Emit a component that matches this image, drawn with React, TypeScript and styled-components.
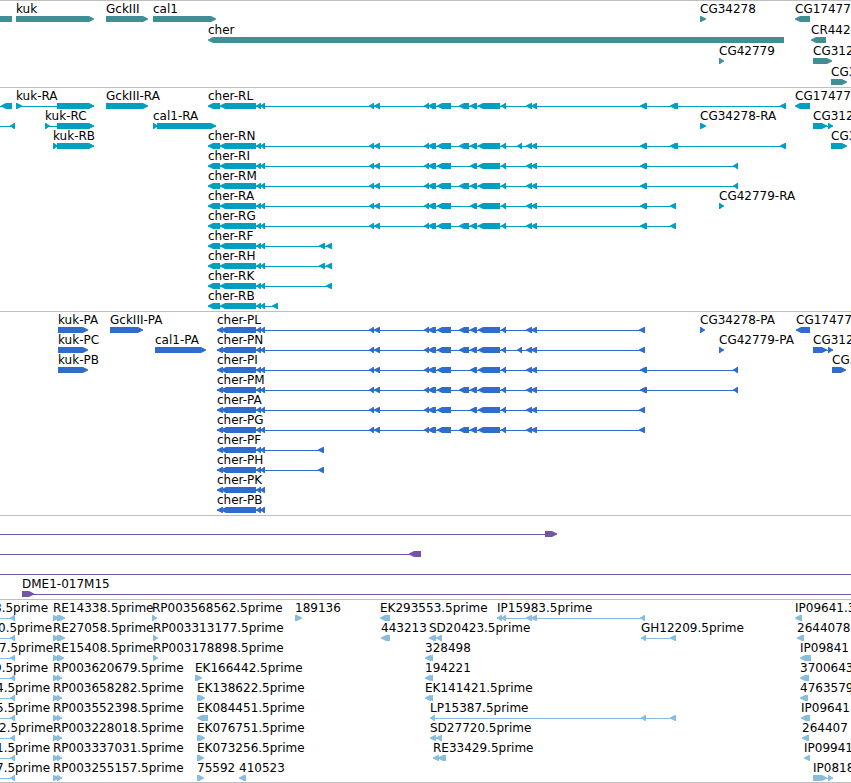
import React from "react";
import styled, { createGlobalStyle } from "styled-components";

type Strand = "+" | "-" | "none";

interface Feature {
  name?: string;
  /** Start of the label, when it differs from the start of the feature. */
  labelAt?: number;
  strand: Strand;
  /** Start and end of every block, left to right. */
  blocks: [number, number][];
  /** Extent of the connecting line; defaults to the extent of the blocks. */
  span?: [number, number];
}

interface TrackData {
  id: string;
  title: string;
  color: string;
  gap: number;
  rows: Feature[][];
}

const FAR = 8000;
const GLYPH = 6;
const TIP = 6;

const fwd = (name: string, ...blocks: [number, number][]): Feature => ({
  name,
  strand: "+",
  blocks,
});

const rev = (name: string, ...blocks: [number, number][]): Feature => ({
  name,
  strand: "-",
  blocks,
});

/* Exons shared by the cher isoforms */
const tail: [number, number][] = [[256, 261], [260, 265]];
const rnaHead: [number, number][] = [[208, 220], [220, 256], ...tail];
const proteinHead: [number, number][] = [[217, 223], [221, 256], ...tail];
const optional: [number, number] = [459, 469];

const middle = (withOptional: boolean, extra: [number, number][] = []): [number, number][] => [
  [369, 374],
  [374, 380],
  [424, 429],
  [428, 436],
  [437, 451],
  ...(withOptional ? [optional] : []),
  [470, 477],
  [478, 500],
  [501, 506],
  ...extra,
  [526, 532],
  [531, 537],
];

const small: [number, number] = [517, 522];

const rna = (name: string, ...blocks: [number, number][]) => rev(name, ...rnaHead, ...blocks);
const protein = (name: string, ...blocks: [number, number][]) =>
  rev(name, ...proteinHead, ...blocks);

const intronEnd: Feature = { strand: "-", blocks: [[10, 15]], span: [0, 15] };

const clippedRead = (name: string, labelAt: number): Feature => ({
  ...intronEnd,
  name,
  labelAt,
});

const tracks: TrackData[] = [
  {
    id: "gene",
    title: "Genes",
    color: "#3f8f94",
    gap: 1,
    rows: [
      [
        { strand: "none", blocks: [[0, 12]] },
        fwd("kuk", [16, 94]),
        fwd("GckIII", [106, 148]),
        fwd("cal1", [153, 216]),
        fwd("CG34278", [700, 706]),
        rev("CG17477", [795, 810]),
      ],
      [rev("cher", [208, 784]), rev("CR442", [811, 826])],
      [fwd("CG42779", [719, 724]), fwd("CG312", [813, 832])],
      [fwd("CG3", [831, 847])],
    ],
  },
  {
    id: "transcript",
    title: "Transcripts",
    color: "#009fc0",
    gap: 0,
    rows: [
      [
        { strand: "-", blocks: [[1, 12]], span: [0, 12] },
        fwd("kuk-RA", [16, 22], [57, 94]),
        fwd("GckIII-RA", [106, 148]),
        rna("cher-RL", ...middle(true), [640, 647], [670, 678], [780, 786]),
        rev("CG17477", [795, 810]),
      ],
      [
        intronEnd,
        fwd("kuk-RC", [45, 50], [57, 94]),
        fwd("cal1-RA", [153, 158], [157, 216]),
        fwd("CG34278-RA", [700, 706]),
        fwd("CG312", [813, 827], [828, 833]),
      ],
      [
        fwd("kuk-RB", [53, 58], [57, 94]),
        rna("cher-RN", ...middle(true, [small]), [640, 647], [670, 678], [780, 786]),
        fwd("CG3", [831, 847]),
      ],
      [rna("cher-RI", ...middle(false), [640, 647], [733, 738])],
      [rna("cher-RM", ...middle(true), [640, 647], [733, 738])],
      [
        rna("cher-RA", ...middle(false), [640, 647], [670, 676]),
        fwd("CG42779-RA", [719, 724]),
      ],
      [rna("cher-RG", ...middle(true), [640, 647], [670, 676])],
      [rna("cher-RF", [319, 325], [326, 332])],
      [rna("cher-RH", [319, 325], [326, 332])],
      [rna("cher-RK", [326, 332])],
      [rna("cher-RB", [272, 278])],
    ],
  },
  {
    id: "protein",
    title: "Proteins",
    color: "#306ccb",
    gap: 0,
    rows: [
      [
        fwd("kuk-PA", [58, 88]),
        fwd("GckIII-PA", [110, 143]),
        protein("cher-PL", ...middle(true), [639, 645]),
        fwd("CG34278-PA", [700, 705]),
        rev("CG17477", [796, 810]),
      ],
      [
        fwd("kuk-PC", [58, 88]),
        fwd("cal1-PA", [155, 206]),
        protein("cher-PN", ...middle(true, [small]), [639, 645]),
        fwd("CG42779-PA", [719, 724]),
        fwd("CG312", [813, 827], [828, 833]),
      ],
      [
        fwd("kuk-PB", [58, 88]),
        protein("cher-PI", ...middle(false), [640, 647], [733, 738]),
        fwd("CG3", [832, 846]),
      ],
      [protein("cher-PM", ...middle(true), [640, 647], [733, 738])],
      [protein("cher-PA", ...middle(false), [639, 645])],
      [protein("cher-PG", ...middle(true), [639, 645])],
      [protein("cher-PF", [318, 324])],
      [protein("cher-PH", [318, 324])],
      [protein("cher-PK")],
      [protein("cher-PB")],
    ],
  },
  {
    id: "bac",
    title: "Clones",
    color: "#7454a6",
    gap: 0,
    rows: [
      [{ strand: "+", blocks: [[545, 557]], span: [0, 557] }],
      [{ strand: "-", blocks: [[409, 421]], span: [0, 421] }],
      [{ strand: "none", blocks: [], span: [0, FAR] }],
      [{ name: "DME1-017M15", strand: "+", blocks: [[22, 34]], span: [22, FAR] }],
    ],
  },
  {
    id: "est",
    title: "cDNA and EST reads",
    color: "#88bddd",
    gap: 0,
    rows: [
      [
        clippedRead("8.5prime", -6),
        fwd("RE14338.5prime", [53, 59], [57, 65]),
        fwd("RP003568562.5prime", [152, 157]),
        fwd("189136", [295, 302]),
        rev("EK293553.5prime", [380, 390]),
        rev("IP15983.5prime", [497, 502], [501, 506], [526, 532], [531, 537], [640, 645]),
        rev("IP09641.3", [795, 802]),
      ],
      [
        clippedRead("0.5prime", -2),
        fwd("RE27058.5prime", [53, 59], [57, 65]),
        fwd("RP003313177.5prime", [153, 158]),
        rev("443213", [381, 390]),
        rev("SD20423.5prime", [429, 436], [436, 442]),
        rev("GH12209.5prime", [641, 646], [670, 676]),
        rev("2644078", [797, 804]),
      ],
      [
        clippedRead("7.5prime", -1),
        fwd("RE15408.5prime", [53, 59], [57, 64]),
        fwd("RP003178898.5prime", [153, 158]),
        rev("328498", [425, 431], [428, 433]),
        rev("IP09841", [800, 811]),
      ],
      [
        clippedRead("9.5prime", -6),
        fwd("RP003620679.5prime", [53, 59], [57, 62]),
        fwd("EK166442.5prime", [195, 202]),
        rev("194221", [425, 431], [428, 433]),
        rev("3700643", [800, 809]),
      ],
      [
        clippedRead("4.5prime", -4),
        fwd("RP003658282.5prime", [53, 59], [57, 62]),
        fwd("EK138622.5prime", [197, 205]),
        rev("EK141421.5prime", [425, 431], [428, 433]),
        rev("4763579", [800, 808]),
      ],
      [
        clippedRead("5.5prime", -4),
        fwd("RP003552398.5prime", [53, 59], [57, 62]),
        rev("EK084451.5prime", [197, 208]),
        rev("LP15387.5prime", [430, 435], [641, 646], [670, 676]),
        rev("IP09641", [801, 810]),
      ],
      [
        clippedRead("2.5prime", -1),
        fwd("RP003228018.5prime", [53, 59], [57, 62]),
        fwd("EK076751.5prime", [197, 205]),
        rev("SD27720.5prime", [430, 436], [436, 442]),
        rev("264407", [802, 809]),
      ],
      [
        clippedRead("1.5prime", -4),
        fwd("RP003337031.5prime", [53, 59], [57, 62]),
        fwd("EK073256.5prime", [197, 204]),
        rev("RE33429.5prime", [433, 439], [438, 446]),
        rev("IP09941", [804, 810]),
      ],
      [
        clippedRead("7.5prime", -4),
        fwd("RP003255157.5prime", [53, 59], [57, 62]),
        fwd("75592", [197, 204]),
        rev("410523", [239, 246]),
        fwd("IP0818", [813, 827], [828, 833]),
      ],
    ],
  },
];

const GlobalStyle = createGlobalStyle`
  body {
    margin: 0;
    background: #ffffff;
  }
`;

const Browser = styled.main`
  overflow: hidden;
  border-bottom: 1px solid #bebebe;
  background: #ffffff;
  color: #000000;
  font: 12px/14px "DejaVu Sans", sans-serif;
`;

const TrackPanel = styled.section<{ $color: string; $gap: number; $last: boolean }>`
  display: flex;
  flex-direction: column;
  gap: ${(p) => p.$gap}px;
  padding: 1px 0 ${(p) => (p.$last ? 1 : 2)}px;
  border-top: 1px solid #bebebe;
  fill: ${(p) => p.$color};
`;

const Row = styled.div`
  display: flex;
  flex-direction: column;
`;

const Labels = styled.div`
  position: relative;
  height: 14px;
`;

/* Labels sit at their genomic coordinate and may overlap their neighbours. */
const Label = styled.span`
  position: absolute;
  top: 0;
  white-space: nowrap;
`;

const Glyphs = styled.svg`
  display: block;
  width: 100%;
  height: ${GLYPH}px;
`;

/* A block with a slightly rounded-out arrow head on its downstream side. */
const outline = ([start, end]: [number, number], strand: Strand) => {
  const tip = Math.min(TIP, end - start);
  const head = (x: number, dir: number) =>
    `H${x - dir * (tip - 1)}L${x - dir * 2} 1.5L${x} 2.5V3.5L${x - dir * 2} 4.5L${
      x - dir * (tip - 1)
    } ${GLYPH}`;
  if (strand === "+") {
    return `M${start} 0${head(end, 1)}H${start}Z`;
  }
  if (strand === "-") {
    return `M${end} 0${head(start, -1)}H${end}Z`;
  }
  return `M${start} 0H${end}V${GLYPH}H${start}Z`;
};

const FeatureGlyph = ({ feature }: { feature: Feature }) => {
  const { blocks, span, strand } = feature;
  const [from, to] = span ?? [blocks[0][0], blocks[blocks.length - 1][1]];
  const hasLine = span !== undefined || blocks.length > 1;
  return (
    <g>
      {hasLine && <rect x={from} y={3} width={to - from} height={1} />}
      {blocks.map((block) => (
        <path key={block[0]} d={outline(block, strand)} />
      ))}
    </g>
  );
};

const Track = ({ track, last }: { track: TrackData; last: boolean }) => (
  <TrackPanel $color={track.color} $gap={track.gap} $last={last} aria-label={track.title}>
    {track.rows.map((features, r) => (
      <Row key={r}>
        <Labels>
          {features.map(
            (f, i) =>
              f.name && (
                <Label key={i} style={{ left: f.labelAt ?? f.blocks[0][0] }}>
                  {f.name}
                </Label>
              ),
          )}
        </Labels>
        <Glyphs aria-hidden="true">
          {features.map((f, i) => (
            <FeatureGlyph key={i} feature={f} />
          ))}
        </Glyphs>
      </Row>
    ))}
  </TrackPanel>
);

export default function App() {
  return (
    <Browser>
      <GlobalStyle />
      {tracks.map((track, i) => (
        <Track key={track.id} track={track} last={i === tracks.length - 1} />
      ))}
    </Browser>
  );
}
